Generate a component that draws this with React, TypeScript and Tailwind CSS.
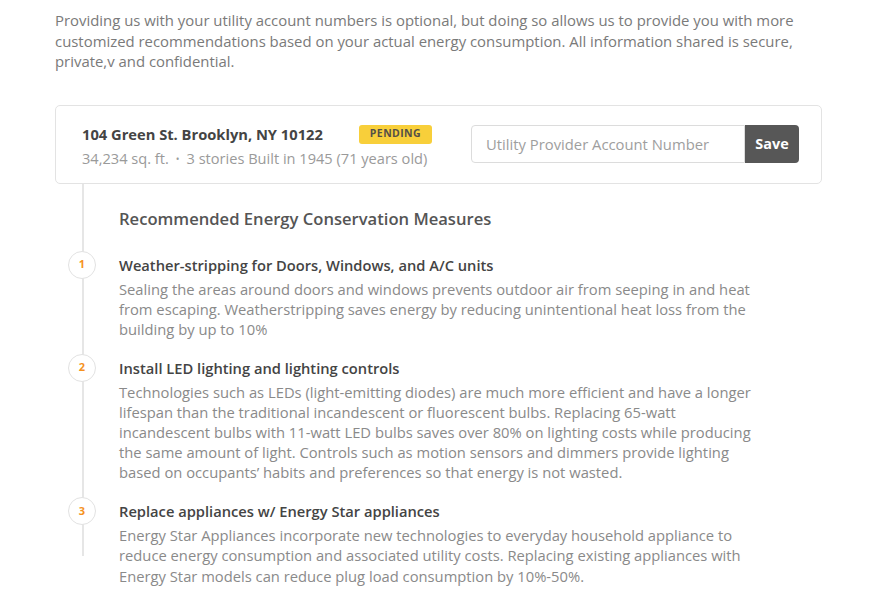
import React from "react";

const items = [
  {
    n: "1",
    title: "Weather-stripping for Doors, Windows, and A/C units",
    lines: [
      "Sealing the areas around doors and windows prevents outdoor air from seeping in and heat",
      "from escaping. Weatherstripping saves energy by reducing unintentional heat loss from the",
      "building by up to 10%",
    ],
  },
  {
    n: "2",
    title: "Install LED lighting and lighting controls",
    lines: [
      "Technologies such as LEDs (light-emitting diodes) are much more efficient and have a longer",
      "lifespan than the traditional incandescent or fluorescent bulbs. Replacing 65-watt",
      "incandescent bulbs with 11-watt LED bulbs saves over 80% on lighting costs while producing",
      "the same amount of light. Controls such as motion sensors and dimmers provide lighting",
      "based on occupants\u2019 habits and preferences so that energy is not wasted.",
    ],
  },
  {
    n: "3",
    title: "Replace appliances w/ Energy Star appliances",
    lines: [
      "Energy Star Appliances incorporate new technologies to everyday household appliance to",
      "reduce energy consumption and associated utility costs. Replacing existing appliances with",
      "Energy Star models can reduce plug load consumption by 10%-50%.",
    ],
  },
];

export default function App() {
  return (
    <div
      className="w-[871px] h-[609px] bg-white overflow-hidden pl-[55px] pr-[49px] pt-[10px]"
      style={{ fontFamily: "'Open Sans', Lato, sans-serif" }}
    >
      <p className="text-[14.9px] leading-[20.5px] text-[#7a7a7a] whitespace-nowrap">
        Providing us with your utility account numbers is optional, but doing so allows us to provide you with more
        <br />
        customized recommendations based on your actual energy consumption. All information shared is secure,
        <br />
        private,v and confidential.
      </p>

      <div className="mt-[33px] h-[79px] border border-[#e3e3e3] rounded-[5px] flex items-center pl-[26px] pr-[22px] pt-[5px]">
        <div className="flex flex-col">
          <div className="flex items-center">
            <span className="text-[14.7px] font-bold text-[#444]">104 Green St. Brooklyn, NY 10122</span>
            <span className="ml-[36px] h-[19px] px-[11px] rounded-[3px] bg-[#f8cf3a] text-[10.5px] font-bold tracking-[0.4px] text-[#555047] flex items-center">
              PENDING
            </span>
          </div>
          <div className="mt-[3px] text-[14.6px] text-[#9a9a9a] flex items-center">
            <span>34,234 sq. ft.</span>
            <span className="mx-[7px] text-[10px]">•</span>
            <span>3 stories Built in 1945 (71 years old)</span>
          </div>
        </div>
        <div className="ml-auto flex h-[38px] -mt-[5px]">
          <div className="w-[274px] border border-[#dcdcdc] rounded-l-[4px] flex items-center pl-[14px] text-[14.8px] text-[#9e9e9e]">
            Utility Provider Account Number
          </div>
          <button className="w-[54px] bg-[#575757] rounded-r-[4px] text-white text-[14.4px] font-bold">
            Save
          </button>
        </div>
      </div>

      <div className="relative pl-[64px]">
        <div className="absolute left-[27px] top-0 h-[372px] w-[2px] bg-[#e6e6e6]" />
        <h2 className="pt-[25px] text-[16.6px] font-semibold text-[#555] leading-[20px]">
          Recommended Energy Conservation Measures
        </h2>
        <div className="mt-[26px] flex flex-col gap-[18.5px]">
          {items.map((it) => (
            <div key={it.n} className="relative">
              <div className="absolute left-[-51px] top-[-4px] w-[28px] h-[28px] rounded-full border border-[#e2e2e2] bg-white flex items-center justify-center text-[11px] font-bold text-[#f5921e]">
                {it.n}
              </div>
              <div className="text-[14.7px] font-semibold text-[#444] leading-[20px]">{it.title}</div>
              <p className="mt-[4px] text-[14.75px] leading-[20.2px] text-[#8a8a8a] whitespace-nowrap">
                {it.lines.map((l, i) => (
                  <React.Fragment key={i}>
                    {l}
                    {i < it.lines.length - 1 && <br />}
                  </React.Fragment>
                ))}
              </p>
            </div>
          ))}
        </div>
      </div>
    </div>
  );
}
